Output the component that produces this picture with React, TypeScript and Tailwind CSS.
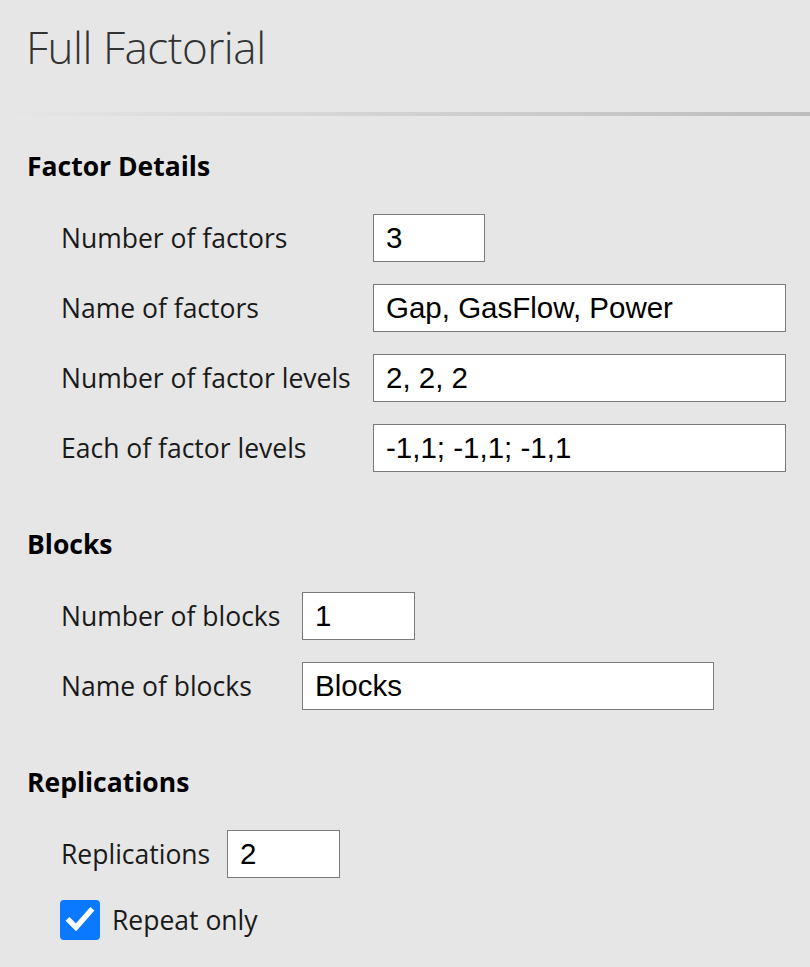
import React from "react";

const labelFont = { fontFamily: '"Segoe UI", "Open Sans", "Noto Sans", sans-serif' };

function Field({ label, value, w }: { label: string; value: string; w: string }) {
  return (
    <>
      <div className="text-[26.5px] text-[#1a1a1a] leading-none whitespace-nowrap">{label}</div>
      <div className={`${w} h-[48px] bg-white border border-[#7a7a7a] flex items-center px-[12px] font-['Liberation_Sans',Arial,sans-serif] text-[29.5px] text-black leading-none`}>
        {value}
      </div>
    </>
  );
}

export default function App() {
  return (
    <div className="w-full h-[967px] bg-[#e6e6e6] overflow-hidden" style={labelFont}>
      <div className="h-[112px] pl-[26px] pt-[22px]">
        <h1 className="text-[44px] font-light text-[#333] leading-[50px] tracking-[-0.5px]">Full Factorial</h1>
      </div>
      <div className="h-[4px] bg-gradient-to-r from-[#e6e6e6] to-[#bdbdbd]" />

      <div className="pl-[27px] pt-[34px]">
        <h2 className="text-[26.5px] font-bold text-black leading-[32px]">Factor Details</h2>
        <div className="grid grid-cols-[296px_auto] gap-x-[16px] gap-y-[22px] items-center pl-[34px] pt-[32px] justify-start">
          <Field label="Number of factors" value="3" w="w-[112px]" />
          <Field label="Name of factors" value="Gap, GasFlow, Power" w="w-[413px]" />
          <Field label="Number of factor levels" value="2, 2, 2" w="w-[413px]" />
          <Field label="Each of factor levels" value="-1,1; -1,1; -1,1" w="w-[413px]" />
        </div>

        <h2 className="text-[26.5px] font-bold text-black leading-[32px] mt-[56px]">Blocks</h2>
        <div className="grid grid-cols-[225px_auto] gap-x-[16px] gap-y-[22px] items-center pl-[34px] pt-[32px] justify-start">
          <Field label="Number of blocks" value="1" w="w-[113px]" />
          <Field label="Name of blocks" value="Blocks" w="w-[412px]" />
        </div>

        <h2 className="text-[26.5px] font-bold text-black leading-[32px] mt-[56px]">Replications</h2>
        <div className="grid grid-cols-[150px_auto] gap-x-[16px] items-center pl-[34px] pt-[32px] justify-start">
          <Field label="Replications" value="2" w="w-[113px]" />
        </div>
        <div className="flex items-center pl-[33px] pt-[22px] gap-[12px]">
          <div className="w-[40px] h-[40px] rounded-[4px] bg-[#0a78ff] flex items-center justify-center">
            <svg width="32" height="32" viewBox="0 0 24 24" fill="none" stroke="white" strokeWidth="4" strokeLinecap="square">
              <path d="M4 12.5l5 5L20 5" />
            </svg>
          </div>
          <span className="text-[26.5px] text-[#1a1a1a] leading-none">Repeat only</span>
        </div>
      </div>
    </div>
  );
}
